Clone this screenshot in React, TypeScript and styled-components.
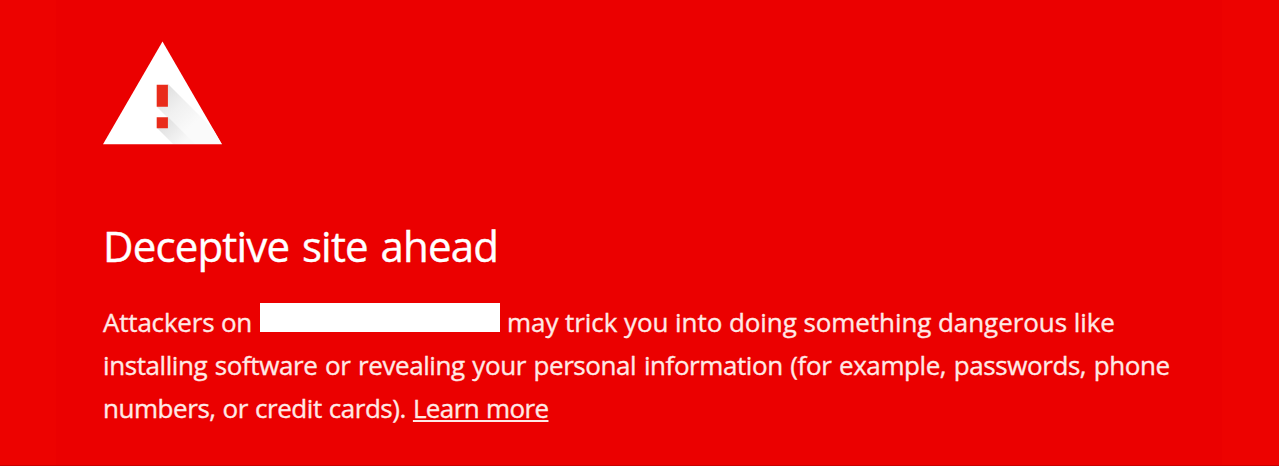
import React from "react";
import styled, { createGlobalStyle } from "styled-components";

const GlobalStyle = createGlobalStyle`
  body {
    margin: 0;
    background: #ed0200;
  }
`;

const Page = styled.div`
  box-sizing: border-box;
  height: 466px;
  padding: 0 57px 0 56px;
  overflow: hidden;
  background: #ed0200;
  border-bottom: 1px solid #c80000;
  font-family: "Open Sans", "Noto Sans", sans-serif;
  color: #fff;
`;

const Interstitial = styled.main`
  box-sizing: border-box;
  height: 100%;
  padding: 41px 0 0 47px;
  background: #eb0000;
`;

const WarningIcon = styled.svg`
  display: block;
  width: 119px;
  height: 104px;
`;

const Title = styled.h1`
  margin: 71px 0 0;
  font-size: 42px;
  font-weight: 400;
  line-height: 60px;
  letter-spacing: -0.82px;
  word-spacing: 2.6px;
  white-space: nowrap;
  -webkit-text-stroke: 0.4px currentColor;
`;

const Message = styled.p`
  margin: 25px 0 0;
  font-size: 26px;
  line-height: 43px;
  color: #ffe9e6;
  -webkit-text-stroke: 0.35px currentColor;
`;

const Line = styled.span<{ $spacing: number; $wordSpacing?: number }>`
  display: flex;
  align-items: baseline;
  height: 43px;
  white-space: pre;
  letter-spacing: ${(p) => p.$spacing}px;
  word-spacing: ${(p) => p.$wordSpacing ?? 0}px;
`;

const Host = styled.span`
  letter-spacing: -0.2px;
`;

const Redacted = styled.span`
  align-self: flex-start;
  width: 240px;
  height: 29px;
  margin: 2px 7px 0 8px;
  background: #fff;
`;

const LearnMore = styled.a`
  color: inherit;
  letter-spacing: -0.6px;
  text-decoration: underline;
  text-decoration-thickness: 2px;
  text-underline-offset: 2px;
  text-decoration-skip-ink: none;
`;

export default function App() {
  return (
    <>
      <GlobalStyle />
      <Page>
        <Interstitial>
          <WarningIcon viewBox="0 0 119 104" aria-hidden="true">
            <defs>
              <linearGradient id="shade" gradientUnits="userSpaceOnUse" x1="58" y1="48" x2="90" y2="84">
                <stop offset="0" stopColor="#dedede" />
                <stop offset="0.5" stopColor="#f0f0f0" />
                <stop offset="1" stopColor="#fafafa" />
              </linearGradient>
              <linearGradient id="shadeLow" gradientUnits="userSpaceOnUse" x1="58" y1="80" x2="80" y2="102">
                <stop offset="0" stopColor="#dedede" />
                <stop offset="1" stopColor="#f8f8f8" />
              </linearGradient>
              <clipPath id="triangle">
                <path d="M59.500 0.500 118.500 103H0.500Z" />
              </clipPath>
            </defs>
            <path d="M59.500 0.500 119 103.300H0Z" fill="#fff" />
            <g clipPath="url(#triangle)">
              <path d="M65 43 126 104H92L54 66Z" fill="url(#shade)" />
              <path d="M65 76 93 104H71L54 87Z" fill="url(#shadeLow)" />
            </g>
            <path d="M53.700 43.700h11.200v22h-11.200zM53.700 76.300h11.200v11h-11.200z" fill="#e92b1a" />
          </WarningIcon>
          <Title>Deceptive site ahead</Title>
          <Message>
            <Line $spacing={-0.07}>
              <Host>Attackers on</Host>
              <Redacted />
              <span>may trick you into doing something dangerous like</span>
            </Line>
            <Line $spacing={-0.42} $wordSpacing={1.3}>
              installing software or revealing your personal information (for example, passwords, phone
            </Line>
            <Line $spacing={-0.45} $wordSpacing={0.7}>
              {"numbers, or credit cards). "}
              <LearnMore>Learn more</LearnMore>
            </Line>
          </Message>
        </Interstitial>
      </Page>
    </>
  );
}
